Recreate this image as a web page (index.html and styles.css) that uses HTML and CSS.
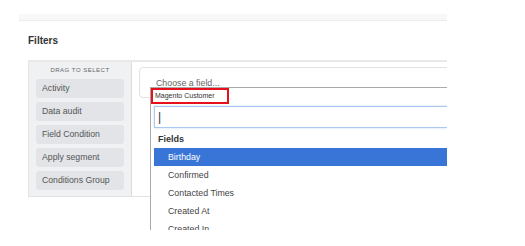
FILE: index.html
```html
<!DOCTYPE html>
<html lang="en">
<head>
    <meta charset="UTF-8">
    <meta name="viewport" content="width=device-width, initial-scale=1.0">
    <title>Filters</title>
    <link rel="stylesheet" href="styles.css">
</head>
<body>
    <div class="page">
        <div class="topbar"></div>
        <h2 class="title">Filters</h2>

        <div class="panel">
            <div class="sidebar">
                <div class="drag-label">DRAG TO SELECT</div>
                <div class="tool">Activity</div>
                <div class="tool">Data audit</div>
                <div class="tool">Field Condition</div>
                <div class="tool">Apply segment</div>
                <div class="tool">Conditions Group</div>
            </div>

            <div class="builder">
                <div class="field-select">Choose a field...</div>
            </div>

            <!-- open chosen dropdown -->
            <div class="dropdown">
                <div class="group-name">Magento Customer</div>
                <div class="search"><span class="caret">|</span></div>
                <div class="group-title">Fields</div>
                <ul class="options">
                    <li class="active">Birthday</li>
                    <li>Confirmed</li>
                    <li>Contacted Times</li>
                    <li>Created At</li>
                    <li>Created In</li>
                </ul>
            </div>
        </div>
    </div>
</body>
</html>
```

FILE: styles.css
```css
/* General Styles */
body {
    margin: 0;
    background-color: #fff;
    font-family: "Liberation Sans", Arial, sans-serif;
    color: #333;
}

.page {
    width: 428px;
    height: 230px;
    margin-left: 19px;
    padding-top: 14px;
    box-sizing: border-box;
    overflow: hidden;
}

.topbar {
    height: 6px;
    background-color: #f8f8f8;
    border-bottom: 1px solid #ececec;
}

.title {
    margin: 0 0 13px 0;
    padding: 14px 0 0 9px;
    font-size: 10px;
    line-height: 12px;
    font-weight: bold;
    color: #333;
}

/* Filter panel */
.panel {
    position: relative;
    display: flex;
    margin-left: 9px;
    border-top: 2px solid #e9e9e9;
    border-bottom: 1px solid #e2e2e2;
}

.sidebar {
    flex: none;
    width: 104px;
    box-sizing: border-box;
    padding: 4px 7px 6px 7px;
    background-color: #eff1f3;
    border-left: 1px solid #e4e4e4;
    border-right: 1px solid #dcdcdc;
}

.drag-label {
    font-size: 6px;
    line-height: 8px;
    letter-spacing: 0.5px;
    text-align: center;
    color: #666;
    margin-bottom: 5px;
}

.tool {
    height: 19px;
    line-height: 19px;
    margin-bottom: 4px;
    padding-left: 6px;
    background-color: #e2e4e7;
    border-radius: 3px;
    font-size: 8.7px;
    color: #555;
    white-space: nowrap;
}

.tool:last-child {
    margin-bottom: 0;
}

.builder {
    flex: 1;
    min-width: 0;
    padding: 5px 0 0 7px;
}

.field-select {
    width: 330px;
    height: 31px;
    box-sizing: border-box;
    padding: 10px 0 0 16px;
    border: 1px solid #e2e2e2;
    border-radius: 4px;
    font-size: 8.8px;
    line-height: 10px;
    color: #666;
}

/* Dropdown */
.dropdown {
    position: absolute;
    left: 122px;
    top: 25px;
    width: 320px;
    height: 143px;
    overflow: hidden;
    background-color: #fff;
    border-top: 1px solid #aaa;
    border-left: 1px solid #aaa;
}

.group-name {
    width: 78px;
    height: 16px;
    box-sizing: border-box;
    padding-left: 2px;
    border: 2px solid #e8101a;
    font-size: 7px;
    line-height: 12px;
    color: #333;
}

.search {
    height: 22px;
    box-sizing: border-box;
    margin: 2px 0 0 3px;
    padding-left: 3px;
    border: 1px solid #a9caee;
    box-shadow: 0 0 2px rgba(80, 150, 230, 0.35);
}

.caret {
    font-size: 12px;
    line-height: 19px;
    color: #333;
}

.group-title {
    margin-top: 2px;
    padding-left: 7px;
    height: 18px;
    line-height: 18px;
    font-size: 9px;
    font-weight: bold;
    color: #333;
}

.options {
    list-style-type: none;
    margin: 0 0 0 3px;
    padding: 0;
}

.options li {
    height: 18px;
    line-height: 18px;
    padding-left: 14px;
    font-size: 8.8px;
    color: #444;
}

.options li.active {
    background-color: #3875d7;
    color: #fff;
}
```
